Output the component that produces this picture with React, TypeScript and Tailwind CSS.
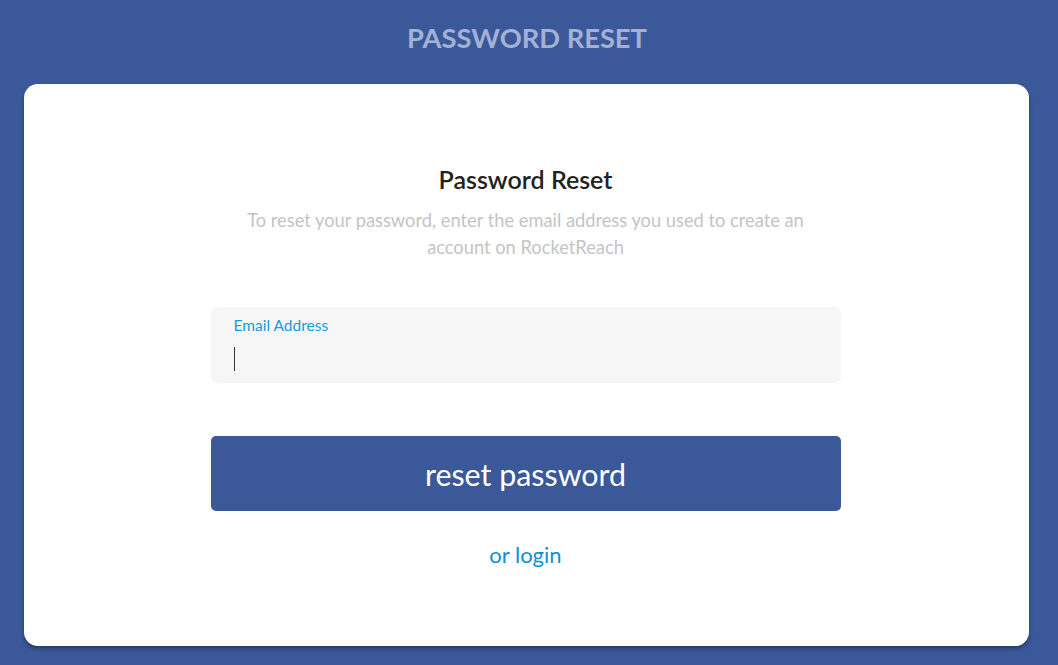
import React from "react";

export default function App() {
  return (
    <div
      className="min-h-[665px] w-full bg-[#3b5998] pb-[19px]"
      style={{ fontFamily: "Lato, 'Noto Sans', sans-serif" }}
    >
      <div className="flex h-[84px] items-start justify-center pt-[20px] pr-[4px]">
        <h1 className="text-[27.3px] font-bold leading-[36px] text-[#a3b1d6]">
          PASSWORD RESET
        </h1>
      </div>
      <div className="ml-[24px] mr-[29px] h-[562px] rounded-[14px] bg-white shadow-[0_3px_4px_rgba(0,0,0,0.3)]">
        <div className="mx-auto flex w-[630px] -translate-x-[1px] flex-col items-center pt-[80px]">
          <h2 className="text-[25px] font-semibold leading-[30px] text-[#222]">
            Password Reset
          </h2>
          <p className="mt-[13px] w-[600px] text-center text-[18.3px] leading-[27px] text-[#c4c4c4]">
            To reset your password, enter the email address you used to create an account on RocketReach
          </p>
          <div className="mt-[46px] h-[76px] w-full rounded-[7px] bg-[#f6f6f6] px-[23px] pt-[8px]">
            <div className="text-[15.5px] leading-[20px] text-[#1a9bd7]">Email Address</div>
            <div className="mt-[12px] h-[24px] w-[1px] bg-[#333]" />
          </div>
          <button className="mt-[53px] flex h-[75px] w-full items-center justify-center rounded-[5px] bg-[#3b5998] text-[30.4px] leading-[36px] text-white">
            reset password
          </button>
          <a className="mt-[30px] text-[22px] leading-[28px] text-[#0e8fd2]">or login</a>
        </div>
      </div>
    </div>
  );
}
